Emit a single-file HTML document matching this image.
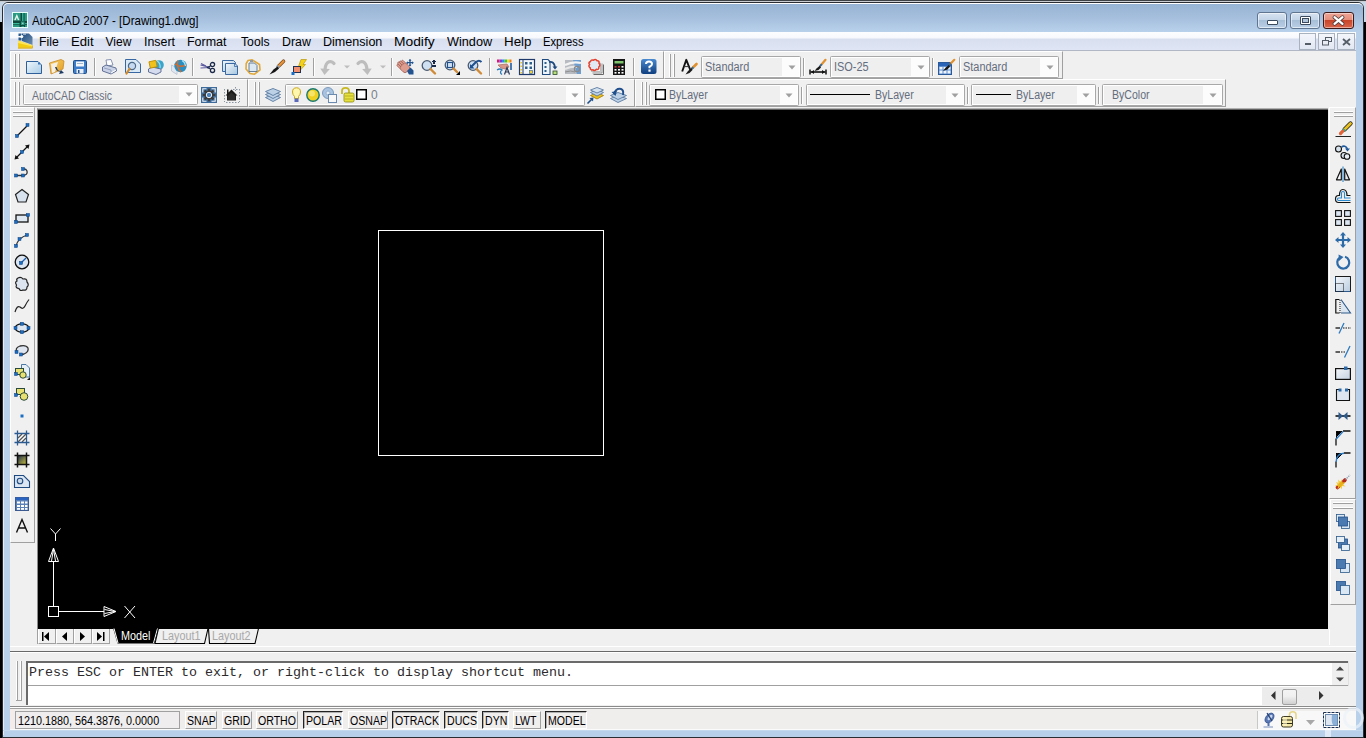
<!DOCTYPE html><html><head><meta charset="utf-8"><title>AutoCAD 2007</title><style>
*{margin:0;padding:0;box-sizing:border-box}
html,body{width:1366px;height:738px;overflow:hidden;background:#000;font-family:"Liberation Sans",sans-serif}
.a{position:absolute}
.t{white-space:nowrap;line-height:14px;font-size:12px;color:#000}
svg{overflow:visible}
</style></head><body>
<div class="a" style="left:0px;top:0px;width:1366px;height:1px;background:#3d4246"></div>
<div class="a" style="left:0px;top:1px;width:1366px;height:1px;background:#c9cdd1"></div>
<div class="a" style="left:0px;top:2px;width:10px;height:20px;background:#c9d8e6"></div>
<div class="a" style="left:1356px;top:2px;width:10px;height:20px;background:#c9d8e6"></div>
<div class="a" style="left:2px;top:2px;width:1362px;height:736px;background:#b8d0ea;border:1px solid #2b2f33;border-radius:6px 6px 0 0"></div>
<div class="a" style="left:3px;top:3px;width:1360px;height:29px;background:linear-gradient(#98b4d4,#a5bfdd 50%,#b9d1eb);border-top:1px solid #fff;border-left:1px solid #e4edf7;border-radius:5px 5px 0 0"></div>
<div class="a" style="left:3px;top:22px;width:1px;height:713px;background:#e4edf7"></div>
<div class="a" style="left:3px;top:730px;width:1360px;height:1px;background:#c5d9ee"></div>
<svg class="a" style="left:12px;top:12px" width="16" height="16" viewBox="0 0 16 16"><rect x="0" y="0" width="16" height="16" fill="#e6fff8"/><rect x="1" y="1" width="14" height="14" fill="#0f4a3e"/><path d="M1 1 H8.5 V9 H1 Z" fill="#2a9a82"/><path d="M2 8.5 L4.8 2 L7.6 8.5 Z" fill="#e8f4ee"/><path d="M3.6 8.5 L4.8 5.5 L6 8.5 Z" fill="#2a9a82"/><rect x="1" y="8.5" width="7" height="1.2" fill="#0f4a3e"/><rect x="10" y="1" width="1.5" height="8" fill="#35b095"/><rect x="12.5" y="1" width="2.5" height="8" fill="#2a9a82"/><rect x="1" y="11" width="6.5" height="1.3" fill="#3ab89a"/><rect x="1" y="13" width="6.5" height="2" fill="#2a9a82"/><rect x="9" y="9.5" width="3.5" height="3.5" fill="#2a9a82"/><rect x="10.3" y="10.8" width="1" height="1" fill="#fff"/><rect x="13" y="11" width="2" height="1.2" fill="#35b095"/><rect x="13" y="13" width="2" height="2" fill="#2a9a82"/><rect x="9.5" y="14" width="2.5" height="1" fill="#2a9a82"/></svg>
<div class="a t" style="left:32px;top:14px;font-size:12.4px;transform:scaleX(0.93);transform-origin:0 0;color:#000">AutoCAD 2007 - [Drawing1.dwg]</div>
<div class="a" style="left:1257px;top:12px;width:30px;height:17px;border:1px solid #5f7590;border-radius:3px;background:linear-gradient(#d5e2f0 0,#c4d5e8 45%,#a8bfd8 50%,#b9cfe6 100%);box-shadow:inset 0 0 0 1px rgba(255,255,255,.55)"></div>
<div class="a" style="left:1267px;top:20px;width:11px;height:5px;background:#fff;border:1px solid #3b4a5c;border-radius:1px"></div>
<div class="a" style="left:1290px;top:12px;width:30px;height:17px;border:1px solid #5f7590;border-radius:3px;background:linear-gradient(#d5e2f0 0,#c4d5e8 45%,#a8bfd8 50%,#b9cfe6 100%);box-shadow:inset 0 0 0 1px rgba(255,255,255,.55)"></div>
<div class="a" style="left:1300px;top:16px;width:11px;height:9px;background:#fff;border:1px solid #3b4a5c;border-radius:1px"></div>
<div class="a" style="left:1302px;top:18px;width:7px;height:5px;background:#b0c4da;border:1px solid #3b4a5c"></div>
<div class="a" style="left:1323px;top:12px;width:31px;height:17px;border:1px solid #3c1a1a;border-radius:3px;background:linear-gradient(#eea596 0,#e58e7c 45%,#c9452a 50%,#d9664b 100%);box-shadow:inset 0 0 0 1px rgba(255,255,255,.45)"></div>
<svg class="a" style="left:1333px;top:16px" width="11" height="9" viewBox="0 0 11 9"><path d="M1.5 1.2 L9.5 7.8 M9.5 1.2 L1.5 7.8" stroke="#4a3a3a" stroke-width="3.8" stroke-linecap="round"/><path d="M1.5 1.2 L9.5 7.8 M9.5 1.2 L1.5 7.8" stroke="#fff" stroke-width="2.3" stroke-linecap="round"/></svg>
<div class="a" style="left:10px;top:32px;width:1346px;height:698px;background:#f0f0f0"></div>
<div class="a" style="left:10px;top:32px;width:1346px;height:18px;background:linear-gradient(#fcfdfe 0,#f6f8fc 6px,#d8dfef 7px,#dfe5f5 100%)"></div>
<div class="a" style="left:10px;top:50px;width:1346px;height:1px;background:#b1b7c4"></div>
<svg class="a" style="left:18px;top:33px" width="16" height="16" viewBox="0 0 16 16"><defs><linearGradient id="gmi" x1="0" y1="0" x2="1" y2="1"><stop offset="0" stop-color="#1f4d80"/><stop offset="1" stop-color="#6f8fae"/></linearGradient></defs><path d="M4 0.5 H11 L14.5 4 V12 L4 8 Z" fill="url(#gmi)"/><rect x="0.5" y="0.5" width="3" height="2.5" fill="#2a5a8a"/><rect x="0.5" y="4.5" width="3" height="3" fill="#2a5a8a"/><rect x="5" y="0.5" width="3" height="1.5" fill="#fff" opacity=".5"/><circle cx="3.8" cy="3.5" r="1.5" fill="#fff"/><path d="M0 7.5 L12 11.5 L14.5 12.5 V15.5 H0 Z" fill="#f2cc10"/><path d="M0 7.5 L12 11.5 L14.5 12.5 V13.5 L0 10 Z" fill="#fbe45a"/><path d="M0 15 H14.5 V12.5" stroke="#d8b040" stroke-width="1" fill="none"/></svg>
<div class="a t" style="left:39px;top:35px;font-size:12px;transform:scaleX(1.023);transform-origin:0 0">File</div>
<div class="a t" style="left:70.7px;top:35px;font-size:12px;transform:scaleX(1.095);transform-origin:0 0">Edit</div>
<div class="a t" style="left:105.5px;top:35px;font-size:12px;transform:scaleX(1.000);transform-origin:0 0">View</div>
<div class="a t" style="left:144px;top:35px;font-size:12px;transform:scaleX(1.033);transform-origin:0 0">Insert</div>
<div class="a t" style="left:187px;top:35px;font-size:12px;transform:scaleX(1.040);transform-origin:0 0">Format</div>
<div class="a t" style="left:241px;top:35px;font-size:12px;transform:scaleX(1.018);transform-origin:0 0">Tools</div>
<div class="a t" style="left:282px;top:35px;font-size:12px;transform:scaleX(1.028);transform-origin:0 0">Draw</div>
<div class="a t" style="left:322.8px;top:35px;font-size:12px;transform:scaleX(1.047);transform-origin:0 0">Dimension</div>
<div class="a t" style="left:393.8px;top:35px;font-size:12px;transform:scaleX(1.150);transform-origin:0 0">Modify</div>
<div class="a t" style="left:446.5px;top:35px;font-size:12px;transform:scaleX(1.057);transform-origin:0 0">Window</div>
<div class="a t" style="left:503.8px;top:35px;font-size:12px;transform:scaleX(1.112);transform-origin:0 0">Help</div>
<div class="a t" style="left:543px;top:35px;font-size:12px;transform:scaleX(0.936);transform-origin:0 0">Express</div>
<div class="a" style="left:1299px;top:33px;width:17px;height:17px;border:1px solid #a9b2bf;background:linear-gradient(#f3f6fb,#e2e8f2)"></div>
<div class="a" style="left:1318px;top:33px;width:17px;height:17px;border:1px solid #a9b2bf;background:linear-gradient(#f3f6fb,#e2e8f2)"></div>
<div class="a" style="left:1337px;top:33px;width:18px;height:17px;border:1px solid #a9b2bf;background:linear-gradient(#f3f6fb,#e2e8f2)"></div>
<div class="a" style="left:1305px;top:43px;width:6px;height:2px;background:#555d66"></div>
<svg class="a" style="left:1322px;top:37px" width="10" height="9" viewBox="0 0 10 9"><rect x="3.5" y="0.5" width="6" height="4" fill="none" stroke="#555d66"/><rect x="0.5" y="3.5" width="6" height="4.5" fill="#e8edf4" stroke="#555d66"/></svg>
<svg class="a" style="left:1342px;top:38px" width="9" height="8" viewBox="0 0 9 8"><path d="M1 1 L8 7 M8 1 L1 7" stroke="#555d66" stroke-width="1.8"/></svg>
<div class="a" style="left:10px;top:51px;width:1346px;height:0px;"></div>
<div class="a" style="left:10px;top:51px;width:654px;height:28px;background:#f0f0f0;border-top:1px solid #fff;border-left:1px solid #fff;border-right:1px solid #a0a0a0;border-bottom:1px solid #a0a0a0"></div>
<div class="a" style="left:14px;top:54px;width:1px;height:23px;background:#fff"></div>
<div class="a" style="left:15px;top:54px;width:1px;height:23px;background:#a0a0a0"></div>
<div class="a" style="left:18px;top:54px;width:1px;height:23px;background:#fff"></div>
<div class="a" style="left:19px;top:54px;width:1px;height:23px;background:#a0a0a0"></div>
<div class="a" style="left:664px;top:51px;width:399px;height:28px;background:#f0f0f0;border-top:1px solid #fff;border-left:1px solid #fff;border-right:1px solid #a0a0a0;border-bottom:1px solid #a0a0a0"></div>
<div class="a" style="left:669px;top:54px;width:1px;height:23px;background:#fff"></div>
<div class="a" style="left:670px;top:54px;width:1px;height:23px;background:#a0a0a0"></div>
<div class="a" style="left:673px;top:54px;width:1px;height:23px;background:#fff"></div>
<div class="a" style="left:674px;top:54px;width:1px;height:23px;background:#a0a0a0"></div>
<div class="a" style="left:10px;top:79px;width:238px;height:28px;background:#f0f0f0;border-top:1px solid #fff;border-left:1px solid #fff;border-right:1px solid #a0a0a0;border-bottom:1px solid #a0a0a0"></div>
<div class="a" style="left:14px;top:82px;width:1px;height:23px;background:#fff"></div>
<div class="a" style="left:15px;top:82px;width:1px;height:23px;background:#a0a0a0"></div>
<div class="a" style="left:18px;top:82px;width:1px;height:23px;background:#fff"></div>
<div class="a" style="left:19px;top:82px;width:1px;height:23px;background:#a0a0a0"></div>
<div class="a" style="left:248px;top:79px;width:387px;height:28px;background:#f0f0f0;border-top:1px solid #fff;border-left:1px solid #fff;border-right:1px solid #a0a0a0;border-bottom:1px solid #a0a0a0"></div>
<div class="a" style="left:254px;top:82px;width:1px;height:23px;background:#fff"></div>
<div class="a" style="left:255px;top:82px;width:1px;height:23px;background:#a0a0a0"></div>
<div class="a" style="left:258px;top:82px;width:1px;height:23px;background:#fff"></div>
<div class="a" style="left:259px;top:82px;width:1px;height:23px;background:#a0a0a0"></div>
<div class="a" style="left:635px;top:79px;width:591px;height:28px;background:#f0f0f0;border-top:1px solid #fff;border-left:1px solid #fff;border-right:1px solid #a0a0a0;border-bottom:1px solid #a0a0a0"></div>
<div class="a" style="left:641px;top:82px;width:1px;height:23px;background:#fff"></div>
<div class="a" style="left:642px;top:82px;width:1px;height:23px;background:#a0a0a0"></div>
<div class="a" style="left:645px;top:82px;width:1px;height:23px;background:#fff"></div>
<div class="a" style="left:646px;top:82px;width:1px;height:23px;background:#a0a0a0"></div>
<svg class="a" style="left:26px;top:61px" width="16" height="13" viewBox="0 0 16 13"><defs><linearGradient id="gn" x1="0" y1="0" x2="1" y2="1"><stop offset="0" stop-color="#eef7fd"/><stop offset="1" stop-color="#a9cbe4"/></linearGradient></defs><path d="M0.5 0.5 H12 L15.5 4 V12.5 H0.5 Z" fill="url(#gn)" stroke="#2f5f98"/><rect x="12" y="1.5" width="2" height="2" fill="#3a78c0"/></svg>
<svg class="a" style="left:49px;top:59px" width="16" height="16" viewBox="0 0 16 16"><defs><linearGradient id="go" x1="0" y1="0" x2="1" y2="1"><stop offset="0" stop-color="#f7d36a"/><stop offset="1" stop-color="#e39a1e"/></linearGradient></defs><path d="M0.5 4 L12 0.5 L15 2 L14 10 L2 15 Z" fill="url(#go)" stroke="#c98a2a" stroke-width="0.8"/><path d="M2 5 L9 3 L6 13 L3 14 Z" fill="#f4f0e6"/><path d="M6 8 Q7 12 11 13 L10 15 L15 14 L12 11 L11 12.5 Q8 11 7.5 8 Z" fill="#1d3b63"/></svg>
<svg class="a" style="left:73px;top:60px" width="14" height="14" viewBox="0 0 14 14"><rect x="0.5" y="0.5" width="13" height="13" rx="1" fill="#3d7cc9" stroke="#1f4f8c"/><rect x="3" y="1.5" width="8" height="5" fill="#f2f5fa"/><rect x="4" y="3" width="6" height="1" fill="#9fb7d3"/><rect x="3.5" y="9" width="7" height="4.5" fill="#e9eef5"/><rect x="5" y="10" width="1.5" height="3" fill="#1f4f8c"/></svg>
<div class="a" style="left:94px;top:58px;width:1px;height:18px;background:#a0a0a0"></div>
<div class="a" style="left:95px;top:58px;width:1px;height:18px;background:#fff"></div>
<svg class="a" style="left:102px;top:59px" width="15" height="16" viewBox="0 0 15 16"><path d="M4 1 L9 0.5 L11 6 L5 7 Z" fill="#fff" stroke="#6a7aa0" stroke-width="0.8"/><path d="M0.5 8 L4 6 L14 9 L14.5 12 L9 15 L0.5 12 Z" fill="#c9d2e6" stroke="#56648c" stroke-width="0.9"/><path d="M2 9 L9 11 L9 14" stroke="#8995b5" fill="none" stroke-width="0.8"/><path d="M9 14 L14 11" stroke="#fff" stroke-width="1"/></svg>
<svg class="a" style="left:125px;top:59px" width="16" height="16" viewBox="0 0 16 16"><path d="M0.5 0.5 H11 L15.5 5 V13.5 H0.5 Z" fill="#d9e9f6" stroke="#3867a2"/><circle cx="7" cy="7" r="3.6" fill="#c5daf0" stroke="#4d6a8c" stroke-width="1.2"/><path d="M4.5 10 L1.5 14.5" stroke="#d08a2a" stroke-width="2.2" stroke-linecap="round"/></svg>
<svg class="a" style="left:148px;top:59px" width="16" height="16" viewBox="0 0 16 16"><circle cx="11" cy="6" r="4.8" fill="#3ba4c8"/><path d="M9 2 Q13 4 12 10" stroke="#9be0f4" stroke-width="1.2" fill="none"/><path d="M0.5 10 L4 8 L13 10 L13 13 L8 15.5 L0.5 13 Z" fill="#d5dcef" stroke="#56648c" stroke-width="0.9"/><rect x="1.5" y="2" width="7" height="6.5" transform="rotate(-12 5 5)" fill="#f1c21b" stroke="#b88a00" stroke-width="0.8"/></svg>
<svg class="a" style="left:171px;top:59px" width="16" height="16" viewBox="0 0 16 16"><path d="M0.5 6 L6 9 L6 15.5 L0.5 12 Z" fill="#e3e8f0" stroke="#b8c2d0" stroke-width="0.8"/><circle cx="9.5" cy="7" r="6.2" fill="#2a8fc0"/><path d="M4 5 Q9 9 15 6 M7 1.5 Q5 8 10 13" stroke="#d86a2a" stroke-width="1.6" fill="none"/><path d="M11 1.5 Q14 3 14.5 7" stroke="#a8e3f8" stroke-width="1.2" fill="none"/></svg>
<div class="a" style="left:192px;top:58px;width:1px;height:18px;background:#a0a0a0"></div>
<div class="a" style="left:193px;top:58px;width:1px;height:18px;background:#fff"></div>
<svg class="a" style="left:200px;top:62px" width="16" height="11" viewBox="0 0 16 11"><path d="M0.5 3 L10 5.5 M0.5 6 L10 5.5 M1 1.5 L6 4" stroke="#5c5aa0" stroke-width="1.1"/><circle cx="12.5" cy="2.6" r="2.1" fill="none" stroke="#1c2a4a" stroke-width="1.3"/><circle cx="12.5" cy="8.4" r="2.1" fill="none" stroke="#1c2a4a" stroke-width="1.3"/><path d="M7 5.5 L10.5 4 M7 5.5 L10.5 7" stroke="#1c2a4a" stroke-width="1.1"/></svg>
<svg class="a" style="left:222px;top:60px" width="16" height="15" viewBox="0 0 16 15"><defs><linearGradient id="gc" x1="0" y1="0" x2="1" y2="1"><stop offset="0" stop-color="#f1f7fc"/><stop offset="1" stop-color="#a7c6de"/></linearGradient></defs><path d="M0.5 0.5 H11.5 L13.5 2.5 V11.5 H0.5 Z" fill="url(#gc)" stroke="#3a68a0"/><path d="M3.5 3.5 H13 L15.5 6 V14.5 H3.5 Z" fill="url(#gc)" stroke="#3a68a0"/><path d="M12.5 4 V6.5 H15" stroke="#3a68a0" fill="none" stroke-width="0.8"/></svg>
<svg class="a" style="left:245px;top:59px" width="16" height="16" viewBox="0 0 16 16"><path d="M3 1.5 L7 0.8 L9 2 L14.5 5.5 L15 11 L9.5 15.2 L5 14.5 L1 10 L1.2 4.5 Z" fill="#eef2f6" stroke="#e0a838" stroke-width="1.6"/><path d="M4 4 H9.5 L12 6.5 V12.5 H4 Z" fill="#dce8f2" stroke="#5a7288" stroke-width="0.9"/><path d="M5 1 H8 V3 H5 Z" fill="#8a9aaa"/></svg>
<svg class="a" style="left:269px;top:60px" width="16" height="15" viewBox="0 0 16 15"><path d="M14.5 1.2 L9.5 6.2" stroke="#7a4a20" stroke-width="3.6" stroke-linecap="round"/><path d="M14.5 1.2 L9.5 6.2" stroke="#e8943a" stroke-width="2.2" stroke-linecap="round"/><path d="M9.8 5.8 L8 7.6" stroke="#8a9aa8" stroke-width="3"/><path d="M8.5 6.5 L4.5 9.5 L0.5 14.5 L6 12 L10 8.5 Z" fill="#151515"/></svg>
<svg class="a" style="left:291px;top:59px" width="16" height="16" viewBox="0 0 16 16"><path d="M10 0.5 L15.5 0.5 L12 5.5 L14.5 5.5 L8.5 12 L10 7.5 L7.5 7.5 Z" fill="#f5d21a" stroke="#b8960a" stroke-width="0.7"/><rect x="2.5" y="7.5" width="7" height="6" fill="#f09070" stroke="#1f3050"/><rect x="0.5" y="13" width="3" height="3" fill="#1a6fc4"/></svg>
<div class="a" style="left:313px;top:58px;width:1px;height:18px;background:#a0a0a0"></div>
<div class="a" style="left:314px;top:58px;width:1px;height:18px;background:#fff"></div>
<svg class="a" style="left:320px;top:60px" width="16" height="15" viewBox="0 0 16 15"><path d="M14 3.5 Q12 0.8 9 1.8 Q5.5 3.2 5 9.5" stroke="#bdbdbd" stroke-width="3.2" fill="none" stroke-linecap="round"/><path d="M0.3 8.5 L9.8 9 L4.5 15 Z" fill="#bdbdbd"/></svg>
<svg class="a" style="left:344px;top:65px" width="6" height="4" viewBox="0 0 6 4"><path d="M0 0.5h6l-3 3z" fill="#bdbdbd"/></svg>
<svg class="a" style="left:356px;top:60px" width="16" height="15" viewBox="0 0 16 15"><path d="M2 3.5 Q4 0.8 7 1.8 Q10.5 3.2 11 9.5" stroke="#bdbdbd" stroke-width="3.2" fill="none" stroke-linecap="round"/><path d="M15.7 8.5 L6.2 9 L11.5 15 Z" fill="#bdbdbd"/></svg>
<svg class="a" style="left:380px;top:65px" width="6" height="4" viewBox="0 0 6 4"><path d="M0 0.5h6l-3 3z" fill="#bdbdbd"/></svg>
<div class="a" style="left:391px;top:58px;width:1px;height:18px;background:#a0a0a0"></div>
<div class="a" style="left:392px;top:58px;width:1px;height:18px;background:#fff"></div>
<svg class="a" style="left:398px;top:59px" width="16" height="16" viewBox="0 0 16 16"><g transform="rotate(-45 7 9)"><g fill="#dc9c8e" stroke="#9c5a50" stroke-width="0.7"><rect x="3" y="1" width="2" height="7" rx="1"/><rect x="5" y="0" width="2" height="8" rx="1"/><rect x="7" y="0.5" width="2" height="8" rx="1"/><rect x="9" y="1.5" width="2" height="7" rx="1"/><rect x="3" y="5" width="8" height="8" rx="2.5"/></g><rect x="3.6" y="5.5" width="6.8" height="4" fill="#dc9c8e"/></g><path d="M9 12 L12.5 8.5 L15.5 11.5 L15.5 15.5 L11 15.5 Z" fill="#23538f"/><path d="M12 0.5 V7 M8.8 3.7 H15.2" stroke="#23538f" stroke-width="1.3"/><path d="M12 0 L10.5 1.8 H13.5 Z M12 7.5 L10.5 5.7 H13.5Z M8.3 3.7 L10 2.2 V5.2Z M15.7 3.7 L14 2.2 V5.2Z" fill="#23538f"/></svg>
<svg class="a" style="left:421px;top:59px" width="16" height="16" viewBox="0 0 16 16"><circle cx="6" cy="6.5" r="4.8" fill="#cfe0f2" stroke="#4a5a70" stroke-width="1.3"/><path d="M9.5 10 L14 14.5" stroke="#cf8a3a" stroke-width="2.4" stroke-linecap="round"/><path d="M13 0.8 V5 M10.8 2.9 H15.2 M10.8 7 H15.2" stroke="#1a2a4a" stroke-width="1.1" shape-rendering="crispEdges"/></svg>
<svg class="a" style="left:444px;top:59px" width="16" height="16" viewBox="0 0 16 16"><circle cx="6" cy="6" r="4.8" fill="#cfe0f2" stroke="#4a5a70" stroke-width="1.3"/><rect x="3.5" y="3.5" width="5" height="5" fill="none" stroke="#1f4f8c" stroke-width="1.1"/><path d="M9.5 9.5 L13 13" stroke="#cf8a3a" stroke-width="2.4" stroke-linecap="round"/><path d="M16 12 L16 16 L12 16 Z" fill="#000"/></svg>
<svg class="a" style="left:467px;top:59px" width="16" height="16" viewBox="0 0 16 16"><circle cx="6" cy="6.5" r="4.8" fill="#cfe0f2" stroke="#4a5a70" stroke-width="1.3"/><path d="M9.5 10 L14 14.5" stroke="#cf8a3a" stroke-width="2.4" stroke-linecap="round"/><path d="M4 8 L9 3 Q12 0.5 14.5 3" stroke="#1f4f8c" stroke-width="2" fill="none"/><path d="M3 5 L3 9.5 L7.5 9.5 Z" fill="#1f4f8c"/></svg>
<div class="a" style="left:489px;top:58px;width:1px;height:18px;background:#a0a0a0"></div>
<div class="a" style="left:490px;top:58px;width:1px;height:18px;background:#fff"></div>
<svg class="a" style="left:496px;top:59px" width="16" height="16" viewBox="0 0 16 16"><rect x="1" y="0.5" width="2.5" height="3" fill="#e2136e"/><rect x="3.5" y="0.5" width="2.5" height="3" fill="#7a3bd6"/><rect x="6" y="0.5" width="2.5" height="3" fill="#2f8ce8"/><rect x="8.5" y="0.5" width="2.5" height="3" fill="#3ec83e"/><rect x="11" y="0.5" width="2.5" height="3" fill="#f2dc24"/><rect x="13.5" y="0.5" width="2" height="3" fill="#f07c1a"/><path d="M2 6 L11 5 L13 8 L9 10 L5 9 Z" fill="#d9968a" stroke="#a86860" stroke-width="0.7"/><rect x="14" y="4" width="2" height="7" fill="#4a7ab0"/><path d="M1 11 Q4 9 6 11 Q3 13 6 15.5" stroke="#2a7ab8" stroke-width="1.3" fill="none"/><path d="M8.5 15.5 L11 8.5 L13.5 15.5 M9.5 13 H12.5" stroke="#2a3a5a" stroke-width="1.2" fill="none"/></svg>
<svg class="a" style="left:519px;top:59px" width="16" height="16" viewBox="0 0 16 16"><rect x="0.5" y="0.5" width="15" height="15" fill="#f4f8fc" stroke="#1f3a6a" stroke-width="1.2"/><path d="M4 1 V15" stroke="#1f3a6a"/><rect x="1.5" y="3" width="1.5" height="1.5" fill="#e8c42a"/><rect x="1.5" y="6.5" width="1.5" height="1.5" fill="#e8c42a"/><rect x="1.5" y="10" width="1.5" height="1.5" fill="#e8c42a"/><rect x="1.5" y="13" width="1.5" height="1.5" fill="#e8c42a"/><rect x="6" y="3" width="2.5" height="2.5" fill="#2e5e8a"/><rect x="10.5" y="3" width="2.5" height="2.5" fill="#2e5e8a"/><rect x="6" y="7.5" width="2.5" height="2.5" fill="#2e5e8a"/><rect x="10.5" y="7.5" width="2.5" height="2.5" fill="#2e5e8a"/><rect x="10.5" y="11.5" width="3" height="3" fill="#f0d040" stroke="#2e5e8a" stroke-width="0.6"/></svg>
<svg class="a" style="left:542px;top:59px" width="16" height="16" viewBox="0 0 16 16"><path d="M0.5 0.5 H6 L8 2.5 V15.5 H0.5 Z" fill="#eef4fa" stroke="#1f4a80" stroke-width="1.1"/><rect x="2.5" y="3" width="2" height="2" fill="#2e5e8a"/><rect x="2.5" y="7" width="2" height="2" fill="#2e5e8a"/><rect x="2.5" y="11" width="2" height="2" fill="#2e5e8a"/><path d="M7 3 Q12 2 13 8" stroke="#1f4a80" stroke-width="1.8" fill="none"/><path d="M10.5 7.5 L15.5 7.5 L13 10.5 Z" fill="#1f4a80"/><rect x="11" y="12" width="4" height="3.5" fill="#b8e07a" stroke="#2a4a2a" stroke-width="0.8"/></svg>
<svg class="a" style="left:565px;top:59px" width="16" height="16" viewBox="0 0 16 16"><rect x="0" y="1" width="16" height="14" fill="#b8bcc2"/><path d="M8 1 H16 V15 H12 Z" fill="#6e9ed0"/><path d="M0 6 Q8 2 16 4" stroke="#f4f4f4" stroke-width="2.2" fill="none"/><path d="M0 10 Q7 7 12 8" stroke="#e8e8e8" stroke-width="2" fill="none"/><circle cx="12" cy="10" r="2.6" fill="none" stroke="#8a8a8a" stroke-width="1.2"/><path d="M0 13 Q6 11 10 13" stroke="#909090" stroke-width="1" fill="none"/></svg>
<svg class="a" style="left:588px;top:59px" width="16" height="16" viewBox="0 0 16 16"><path d="M5.5 15.5 H15.5 V5.5" stroke="#666" stroke-width="1" fill="none"/><path d="M4.5 14 H14 V4.5" stroke="#888" stroke-width="0.9" fill="none"/><path d="M3.5 4 H12.5 V12.5 H3.5 Z" fill="#f6f6f6" stroke="#a0a0a0" stroke-width="0.7"/><path d="M2.5 2.5 Q3 0.3 5.5 1.2 Q7.5 -0.3 9 1.8 Q11.5 1.5 11 4.3 Q12.8 6.3 10.8 8 Q11.2 10.8 8.5 10.3 Q7 12.3 5 10.8 Q2.3 11.5 2.3 9 Q0 7.5 1.5 5.5 Q0 3.5 2.5 2.5 Z" fill="#dfe8f3" stroke="#e3402e" stroke-width="1.5"/></svg>
<svg class="a" style="left:613px;top:59px" width="12" height="16" viewBox="0 0 12 16"><rect x="0" y="0" width="12" height="16" fill="#151515"/><rect x="1.5" y="2" width="9" height="2.5" fill="#7dc46a"/><g fill="#fff"><rect x="1.5" y="7" width="2" height="1.6" fill="#c23a3a"/><rect x="5" y="7" width="2" height="1.6" fill="#c23a3a"/><rect x="8.5" y="7" width="2" height="1.6" fill="#fff"/><rect x="1.5" y="10" width="2" height="1.6"/><rect x="5" y="10" width="2" height="1.6"/><rect x="8.5" y="10" width="2" height="1.6"/><rect x="1.5" y="13" width="2" height="1.6"/><rect x="5" y="13" width="2" height="1.6"/><rect x="8.5" y="13" width="2" height="1.6"/></g></svg>
<div class="a" style="left:633px;top:58px;width:1px;height:18px;background:#a0a0a0"></div>
<div class="a" style="left:634px;top:58px;width:1px;height:18px;background:#fff"></div>
<svg class="a" style="left:641px;top:59px" width="16" height="15" viewBox="0 0 16 15"><defs><linearGradient id="gh" x1="0" y1="0" x2="0" y2="1"><stop offset="0" stop-color="#4a8ad0"/><stop offset="1" stop-color="#0f3f7f"/></linearGradient></defs><rect x="0" y="0" width="15.5" height="15" rx="2.5" fill="url(#gh)"/><path d="M5 5 Q5 2.5 8 2.5 Q11 2.5 11 5 Q11 6.8 8.5 7.8 V9.3" stroke="#fff" stroke-width="2" fill="none"/><rect x="7.4" y="10.5" width="2.2" height="2.2" fill="#fff"/></svg>
<svg class="a" style="left:681px;top:59px" width="17" height="17" viewBox="0 0 17 17"><path d="M1.2 12.5 L5.3 0.8 L9.3 11" stroke="#111" stroke-width="1.9" fill="none" stroke-linejoin="round"/><path d="M3 7.6 H8" stroke="#333" stroke-width="1"/><path d="M15.5 5 L12 8.5" stroke="#e0902e" stroke-width="2.6" stroke-linecap="round"/><path d="M12.3 8.2 L10.5 10" stroke="#3a6a90" stroke-width="2.2"/><path d="M10.5 9 L7 12 L4.5 15.5 L8.5 14 L11.5 11 Z" fill="#1a1a1a"/></svg>
<div class="a" style="left:701px;top:56px;width:100px;height:22px;background:#efefef;border:1px solid #a8a8a8;border-radius:1.5px;box-shadow:inset 0 0 0 1px #fff"></div>
<div class="a" style="left:782px;top:58px;width:17px;height:18px;background:#fcfcfc"></div>
<svg class="a" style="left:788px;top:65px" width="8" height="5" viewBox="0 0 8 5"><path d="M0.5 0.5h7l-3.5 4z" fill="#a0a0a0"/></svg>
<div class="a t" style="left:705px;top:60px;font-size:12px;color:#646d7e;transform:scaleX(0.91);transform-origin:0 0;">Standard</div>
<div class="a" style="left:803px;top:58px;width:1px;height:18px;background:#a0a0a0"></div>
<div class="a" style="left:804px;top:58px;width:1px;height:18px;background:#fff"></div>
<svg class="a" style="left:809px;top:59px" width="18" height="17" viewBox="0 0 18 17"><path d="M1.5 13 H16.5" stroke="#111" stroke-width="1.6"/><path d="M1 10.5 V15.5 M17 10.5 V15.5" stroke="#111" stroke-width="1.5"/><path d="M2 13 L5 11 V15 Z M16 13 L13 11 V15 Z" fill="#111"/><path d="M16.5 0.8 L12.5 5.5" stroke="#e0902e" stroke-width="2.2" stroke-linecap="round"/><path d="M12.8 5.2 L11 7.2" stroke="#3a6a90" stroke-width="2"/><path d="M11 6.5 L7.5 9.5 L5.5 12 L9.5 11 L12 8.5 Z" fill="#1a1a1a"/></svg>
<div class="a" style="left:830px;top:56px;width:100px;height:22px;background:#efefef;border:1px solid #a8a8a8;border-radius:1.5px;box-shadow:inset 0 0 0 1px #fff"></div>
<div class="a" style="left:911px;top:58px;width:17px;height:18px;background:#fcfcfc"></div>
<svg class="a" style="left:917px;top:65px" width="8" height="5" viewBox="0 0 8 5"><path d="M0.5 0.5h7l-3.5 4z" fill="#a0a0a0"/></svg>
<div class="a t" style="left:834px;top:60px;font-size:12px;color:#646d7e;transform:scaleX(0.91);transform-origin:0 0;">ISO-25</div>
<div class="a" style="left:932px;top:58px;width:1px;height:18px;background:#a0a0a0"></div>
<div class="a" style="left:933px;top:58px;width:1px;height:18px;background:#fff"></div>
<svg class="a" style="left:938px;top:59px" width="17" height="16" viewBox="0 0 17 16"><rect x="0.5" y="3.5" width="13" height="12" fill="#5f8fcf" stroke="#2a5a9a"/><rect x="1" y="4" width="12" height="3" fill="#2a64b8"/><g fill="#eef4fb"><rect x="1.5" y="8" width="3" height="2.5"/><rect x="5.5" y="8" width="3" height="2.5"/><rect x="9.5" y="8" width="3" height="2.5"/><rect x="1.5" y="11.5" width="3" height="3"/><rect x="5.5" y="11.5" width="3" height="3"/><rect x="9.5" y="11.5" width="3" height="3"/></g><path d="M16.3 0.8 L12.5 4.8" stroke="#e0902e" stroke-width="2.2" stroke-linecap="round"/><path d="M12.8 4.5 L11 6.5" stroke="#3a6a90" stroke-width="2"/><path d="M11 5.8 L7.5 8.8 L5 12 L9.3 10.5 L12 7.8 Z" fill="#1a1a1a"/></svg>
<div class="a" style="left:959px;top:56px;width:100px;height:22px;background:#efefef;border:1px solid #a8a8a8;border-radius:1.5px;box-shadow:inset 0 0 0 1px #fff"></div>
<div class="a" style="left:1040px;top:58px;width:17px;height:18px;background:#fcfcfc"></div>
<svg class="a" style="left:1046px;top:65px" width="8" height="5" viewBox="0 0 8 5"><path d="M0.5 0.5h7l-3.5 4z" fill="#a0a0a0"/></svg>
<div class="a t" style="left:963px;top:60px;font-size:12px;color:#646d7e;transform:scaleX(0.91);transform-origin:0 0;">Standard</div>
<div class="a" style="left:23px;top:84px;width:175px;height:21px;background:#efefef;border:1px solid #a8a8a8;border-radius:1.5px;box-shadow:inset 0 0 0 1px #fff"></div>
<div class="a" style="left:179px;top:86px;width:17px;height:17px;background:#fcfcfc"></div>
<svg class="a" style="left:185px;top:92px" width="8" height="5" viewBox="0 0 8 5"><path d="M0.5 0.5h7l-3.5 4z" fill="#a0a0a0"/></svg>
<div class="a t" style="left:32px;top:87px;font-size:12px;color:#646d7e;transform:scaleX(0.91);transform-origin:0 0;color:#6b7080;transform:scaleX(0.87);top:89px">AutoCAD Classic</div>
<svg class="a" style="left:201px;top:87px" width="16" height="16" viewBox="0 0 16 16"><rect x="0" y="0" width="16" height="16" fill="#3d6b9b"/><path d="M1.8 5.5 V1.8 H5.5 M10.5 1.8 H14.2 V5.5 M14.2 10.5 V14.2 H10.5 M5.5 14.2 H1.8 V10.5" stroke="#eef4fa" stroke-width="1.1" fill="none"/><g stroke="#3b3b3b" stroke-width="2.2"><path d="M8 1.8 V14.2 M1.8 8 H14.2 M3.6 3.6 L12.4 12.4 M12.4 3.6 L3.6 12.4"/></g><circle cx="8" cy="8" r="4.6" fill="#3b3b3b"/><circle cx="8" cy="8" r="2.7" fill="#4a82bb" stroke="#e8f0f8" stroke-width="1"/></svg>
<svg class="a" style="left:224px;top:87px" width="16" height="16" viewBox="0 0 16 16"><path d="M0.5 2 V15" stroke="#8a96a2" stroke-dasharray="1.5 1.5"/><path d="M2 15.5 H15 M15.5 2 V15 M9 2.5 H15.5 M11.5 0 V4" stroke="#8a96a2" stroke-dasharray="1.5 1.5"/><path d="M1.5 8.5 L3 7 V2.5 H4.5 V5.5 L7.5 2.5 L13.5 8.5 H12 V13.5 H3 V8.5 Z" fill="#1c1c1c"/><path d="M4 9 L7.5 5.5 L11 9 V13 H4 Z" fill="#2c2c2c"/></svg>
<svg class="a" style="left:265px;top:88px" width="16" height="14" viewBox="0 0 16 14"><g stroke="#5a7aa0" stroke-width="0.9" fill="#bcd0e6"><path d="M0.5 9.5 L8 6.5 L15.5 9.5 L8 13.5 Z"/><path d="M0.5 6.5 L8 3.5 L15.5 6.5 L8 10.5 Z"/><path d="M0.5 3.5 L8 0.5 L15.5 3.5 L8 7.5 Z"/></g></svg>
<div class="a" style="left:285px;top:84px;width:300px;height:22px;background:#efefef;border:1px solid #a8a8a8;border-radius:1.5px;box-shadow:inset 0 0 0 1px #fff"></div>
<div class="a" style="left:566px;top:86px;width:17px;height:18px;background:#fcfcfc"></div>
<svg class="a" style="left:571px;top:93px" width="8" height="5" viewBox="0 0 8 5"><path d="M0.5 0.5h7l-3.5 4z" fill="#a0a0a0"/></svg>
<svg class="a" style="left:292px;top:87px" width="9" height="16" viewBox="0 0 9 16"><path d="M4.5 0.8 Q8.5 0.8 8.5 5 Q8.5 7.5 6.5 9.5 V11.5 H2.5 V9.5 Q0.5 7.5 0.5 5 Q0.5 0.8 4.5 0.8 Z" fill="#fff7b0" stroke="#c8a818" stroke-width="1"/><rect x="2.5" y="11.5" width="4" height="3.5" fill="#5a6ab8"/></svg>
<svg class="a" style="left:306px;top:88px" width="14" height="14" viewBox="0 0 14 14"><circle cx="7" cy="7" r="6.2" fill="#f0d020" stroke="#1a7a70" stroke-width="1.4"/><circle cx="6" cy="5.5" r="3" fill="#f7e46a"/></svg>
<svg class="a" style="left:322px;top:87px" width="15" height="16" viewBox="0 0 15 16"><circle cx="6" cy="6" r="5.5" fill="#a8c4e0" stroke="#6a8ab0" stroke-width="0.8"/><circle cx="6" cy="6" r="2" fill="#e0ecf6" stroke="#8aa8c8" stroke-width="0.8"/><rect x="6.5" y="7.5" width="8" height="8" fill="#f8f8f8" stroke="#6a8ab0"/></svg>
<svg class="a" style="left:340px;top:87px" width="15" height="16" viewBox="0 0 15 16"><path d="M2 7 V4 Q2 0.8 5.5 0.8 Q9 0.8 9 4 V6" stroke="#c8b820" stroke-width="1.8" fill="none"/><rect x="4" y="6" width="10" height="9" rx="1.5" fill="#e6e040" stroke="#8a8a10" stroke-width="0.8"/><path d="M5 9 H13 M5 12 H13" stroke="#b8b020"/></svg>
<svg class="a" style="left:356px;top:89px" width="11" height="11" viewBox="0 0 11 11"><rect x="0.75" y="0.75" width="9.5" height="9.5" fill="#fff" stroke="#000" stroke-width="1.5"/></svg>
<div class="a t" style="left:371px;top:88px;font-size:12px;color:#7a7f8a">0</div>
<svg class="a" style="left:587px;top:87px" width="17" height="17" viewBox="0 0 17 17"><g stroke="#5a7aa0" stroke-width="0.9"><path d="M3.5 8.5 L10 5.5 L16.5 8.5 L10 12 Z" fill="#e8c020" stroke="#a88010"/><path d="M3.5 5.5 L10 2.5 L16.5 5.5 L10 9 Z" fill="#bcd0e6"/><path d="M3.5 3 L10 0.5 L16.5 3 L10 6 Z" fill="#d4e2f0"/></g><path d="M0.5 16.5 L5 12" stroke="#1f4f8c" stroke-width="1.6"/><path d="M6.5 10.5 L2.5 11 L6 14.5 Z" fill="#1f4f8c"/></svg>
<svg class="a" style="left:610px;top:87px" width="17" height="17" viewBox="0 0 17 17"><g stroke="#5a7aa0" stroke-width="0.9" fill="#bcd0e6"><path d="M0.5 11.5 L8 8.5 L16.5 11.5 L8 15.5 Z"/><path d="M0.5 8.5 L8 5.5 L16.5 8.5 L8 12.5 Z"/></g><path d="M4 7 Q6 1 11 2 Q14 3 13 8" stroke="#1f4f8c" stroke-width="2" fill="none"/><path d="M1.5 5 L5.5 9 L7 4 Z" fill="#1f4f8c"/></svg>
<div class="a" style="left:649px;top:84px;width:150px;height:22px;background:#efefef;border:1px solid #a8a8a8;border-radius:1.5px;box-shadow:inset 0 0 0 1px #fff"></div>
<div class="a" style="left:780px;top:86px;width:17px;height:18px;background:#fcfcfc"></div>
<svg class="a" style="left:785px;top:93px" width="8" height="5" viewBox="0 0 8 5"><path d="M0.5 0.5h7l-3.5 4z" fill="#a0a0a0"/></svg>
<svg class="a" style="left:655px;top:89px" width="11" height="11" viewBox="0 0 11 11"><rect x="0.75" y="0.75" width="9.5" height="9.5" fill="#fff" stroke="#000" stroke-width="1.5"/></svg>
<div class="a t" style="left:669px;top:88px;font-size:12px;color:#646d7e;transform:scaleX(0.88);transform-origin:0 0">ByLayer</div>
<div class="a" style="left:801px;top:87px;width:1px;height:17px;background:#a0a0a0"></div>
<div class="a" style="left:802px;top:87px;width:1px;height:17px;background:#fff"></div>
<div class="a" style="left:806px;top:84px;width:159px;height:22px;background:#efefef;border:1px solid #a8a8a8;border-radius:1.5px;box-shadow:inset 0 0 0 1px #fff"></div>
<div class="a" style="left:946px;top:86px;width:17px;height:18px;background:#fcfcfc"></div>
<svg class="a" style="left:951px;top:93px" width="8" height="5" viewBox="0 0 8 5"><path d="M0.5 0.5h7l-3.5 4z" fill="#a0a0a0"/></svg>
<div class="a" style="left:810px;top:94px;width:60px;height:1px;background:#000"></div>
<div class="a t" style="left:875px;top:88px;font-size:12px;color:#646d7e;transform:scaleX(0.88);transform-origin:0 0">ByLayer</div>
<div class="a" style="left:967px;top:87px;width:1px;height:17px;background:#a0a0a0"></div>
<div class="a" style="left:968px;top:87px;width:1px;height:17px;background:#fff"></div>
<div class="a" style="left:971px;top:84px;width:125px;height:22px;background:#efefef;border:1px solid #a8a8a8;border-radius:1.5px;box-shadow:inset 0 0 0 1px #fff"></div>
<div class="a" style="left:1077px;top:86px;width:17px;height:18px;background:#fcfcfc"></div>
<svg class="a" style="left:1082px;top:93px" width="8" height="5" viewBox="0 0 8 5"><path d="M0.5 0.5h7l-3.5 4z" fill="#a0a0a0"/></svg>
<div class="a" style="left:976px;top:94px;width:35px;height:1px;background:#000"></div>
<div class="a t" style="left:1016px;top:88px;font-size:12px;color:#646d7e;transform:scaleX(0.88);transform-origin:0 0">ByLayer</div>
<div class="a" style="left:1098px;top:87px;width:1px;height:17px;background:#a0a0a0"></div>
<div class="a" style="left:1099px;top:87px;width:1px;height:17px;background:#fff"></div>
<div class="a" style="left:1102px;top:84px;width:121px;height:22px;background:#efefef;border:1px solid #a8a8a8;border-radius:1.5px;box-shadow:inset 0 0 0 1px #fff"></div>
<div class="a" style="left:1203px;top:86px;width:18px;height:18px;background:#fcfcfc"></div>
<svg class="a" style="left:1209px;top:93px" width="8" height="5" viewBox="0 0 8 5"><path d="M0.5 0.5h7l-3.5 4z" fill="#a0a0a0"/></svg>
<div class="a t" style="left:1112px;top:88px;font-size:12px;color:#646d7e;transform:scaleX(0.88);transform-origin:0 0">ByColor</div>
<div class="a" style="left:37px;top:108px;width:1291px;height:521px;background:#000;border-left:1px solid #8a8a8a;border-top:1px solid #b0b0b0"></div>
<div class="a" style="left:38px;top:109px;width:1290px;height:1px;background:#606060"></div>
<div class="a" style="left:378px;top:230px;width:226px;height:226px;border:1px solid #fff"></div>
<svg class="a" style="left:40px;top:520px" width="100" height="105" viewBox="0 0 100 105"><g stroke="#fff" stroke-width="1" fill="none" shape-rendering="crispEdges"><rect x="8.5" y="86.5" width="10" height="10"/><path d="M13.5 86 V42"/><path d="M18.5 91.5 H64"/></g><g stroke="#fff" stroke-width="1" fill="none"><path d="M8.5 41.5 L13.5 28 L18.5 41.5 Z M11.5 41 L13.5 29 L15.5 41"/><path d="M64 86.5 L76 91.5 L64 96.5 Z M64.5 89.5 L75 91.5 L64.5 93.5"/><path d="M10.5 8.5 L15.5 14 L20.5 8.5 M15.5 14 V21"/><path d="M84.5 86 L95 98 M95 86 L84.5 98"/></g></svg>
<div class="a" style="left:10px;top:107px;width:25px;height:436px;background:#f0f0f0;border-top:1px solid #fff;border-left:1px solid #fff;border-right:1px solid #a0a0a0;border-bottom:1px solid #a0a0a0"></div>
<div class="a" style="left:13px;top:111px;width:20px;height:1px;background:#fff"></div>
<div class="a" style="left:13px;top:112px;width:20px;height:1px;background:#a0a0a0"></div>
<div class="a" style="left:13px;top:115px;width:20px;height:1px;background:#fff"></div>
<div class="a" style="left:13px;top:116px;width:20px;height:1px;background:#a0a0a0"></div>
<svg class="a" style="left:14px;top:122px" width="16" height="16" viewBox="0 0 16 16"><path d="M3 14 L13 4" stroke="#111" stroke-width="1.3"/><rect x="1.5" y="12.5" width="3" height="3" fill="#1a6fc4" stroke="#0d3f7a" stroke-width="0.5"/><rect x="12.0" y="1.5" width="3" height="3" fill="#1a6fc4" stroke="#0d3f7a" stroke-width="0.5"/></svg>
<svg class="a" style="left:14px;top:144px" width="16" height="16" viewBox="0 0 16 16"><path d="M1.5 14.5 L14.5 1.5" stroke="#111" stroke-width="1.3"/><path d="M0.5 15.5 L1.5 11 L5 14.5 Z M15.5 0.5 L11 1.5 L14.5 5 Z" fill="#111"/><rect x="6.5" y="6.5" width="3" height="3" fill="#1a6fc4" stroke="#0d3f7a" stroke-width="0.5"/></svg>
<svg class="a" style="left:14px;top:166px" width="16" height="16" viewBox="0 0 16 16"><path d="M2 9.5 H9 Q14 9 13 5 Q12 2.5 9 3" stroke="#333" stroke-width="1.3" fill="none"/><rect x="0.5" y="8.0" width="3" height="3" fill="#1a6fc4" stroke="#0d3f7a" stroke-width="0.5"/><rect x="7.5" y="8.0" width="3" height="3" fill="#1a6fc4" stroke="#0d3f7a" stroke-width="0.5"/><rect x="7.5" y="1.5" width="3" height="3" fill="#1a6fc4" stroke="#0d3f7a" stroke-width="0.5"/></svg>
<svg class="a" style="left:14px;top:188px" width="16" height="16" viewBox="0 0 16 16"><path d="M8 1.5 L14.5 6.5 L12 14 H4 L1.5 6.5 Z" fill="#d8e2ee" stroke="#222" stroke-width="1.2"/></svg>
<svg class="a" style="left:14px;top:210px" width="16" height="16" viewBox="0 0 16 16"><rect x="2" y="5" width="12" height="7" fill="#dfe7f0" stroke="#111" stroke-width="1.3"/><rect x="0.5" y="10.5" width="3" height="3" fill="#1a6fc4" stroke="#0d3f7a" stroke-width="0.5"/><rect x="12.5" y="3.5" width="3" height="3" fill="#1a6fc4" stroke="#0d3f7a" stroke-width="0.5"/></svg>
<svg class="a" style="left:14px;top:232px" width="16" height="16" viewBox="0 0 16 16"><path d="M2 14 Q4 6 13 3" stroke="#333" stroke-width="1.3" fill="none"/><rect x="0.5" y="12.5" width="3" height="3" fill="#1a6fc4" stroke="#0d3f7a" stroke-width="0.5"/><rect x="4.0" y="5.5" width="3" height="3" fill="#1a6fc4" stroke="#0d3f7a" stroke-width="0.5"/><rect x="11.5" y="1.5" width="3" height="3" fill="#1a6fc4" stroke="#0d3f7a" stroke-width="0.5"/></svg>
<svg class="a" style="left:14px;top:254px" width="16" height="16" viewBox="0 0 16 16"><circle cx="8" cy="8" r="6.8" fill="#dde6f0" stroke="#111" stroke-width="1.3"/><path d="M7 9 L12 4" stroke="#1a5fb0" stroke-width="1.2"/><rect x="5.5" y="7.5" width="3" height="3" fill="#1a6fc4" stroke="#0d3f7a" stroke-width="0.5"/></svg>
<svg class="a" style="left:14px;top:276px" width="16" height="16" viewBox="0 0 16 16"><path d="M4 2 Q7 0.5 9 3 Q13 2 13 6 Q15.5 9 13 11 Q13 15 9 14 Q6 15.5 5 12.5 Q1 12 2.5 9 Q0.5 6 3 5 Q2 3 4 2 Z" fill="#dde6f0" stroke="#222" stroke-width="1.2"/></svg>
<svg class="a" style="left:14px;top:298px" width="16" height="16" viewBox="0 0 16 16"><path d="M1 14 Q3 7 6 9 Q9 12 11 8 Q13 4 15 1.5" stroke="#222" stroke-width="1.2" fill="none"/></svg>
<svg class="a" style="left:14px;top:320px" width="16" height="16" viewBox="0 0 16 16"><ellipse cx="8" cy="8" rx="6.8" ry="4.2" fill="#dde6f0" stroke="#111" stroke-width="1.3"/><rect x="0.0" y="6.5" width="3" height="3" fill="#1a6fc4" stroke="#0d3f7a" stroke-width="0.5"/><rect x="13.0" y="6.5" width="3" height="3" fill="#1a6fc4" stroke="#0d3f7a" stroke-width="0.5"/><rect x="6.5" y="2.3" width="3" height="3" fill="#1a6fc4" stroke="#0d3f7a" stroke-width="0.5"/><rect x="6.5" y="10.7" width="3" height="3" fill="#1a6fc4" stroke="#0d3f7a" stroke-width="0.5"/></svg>
<svg class="a" style="left:14px;top:342px" width="16" height="16" viewBox="0 0 16 16"><path d="M3 10 Q0.5 6 6 4 Q12 2.5 14 6 Q15 10 10 12 Q8 12.5 6 12" stroke="#333" stroke-width="1.3" fill="#dde6f0"/><rect x="1.0" y="8.5" width="3" height="3" fill="#1a6fc4" stroke="#0d3f7a" stroke-width="0.5"/><rect x="5.5" y="11.0" width="3" height="3" fill="#1a6fc4" stroke="#0d3f7a" stroke-width="0.5"/></svg>
<svg class="a" style="left:14px;top:364px" width="16" height="16" viewBox="0 0 16 16"><path d="M7.5 0.5 H12 L15.5 4 V13 H7.5 Z" fill="#e6eef6" stroke="#3a6a9a" stroke-width="0.9"/><rect x="1.5" y="4.5" width="8" height="6" fill="#e8e070" stroke="#2a4a3a"/><circle cx="9" cy="11" r="3.2" fill="#e8e070" stroke="#2a4a3a"/><path d="M16 13 V16 H13 Z" fill="#111"/><rect x="0.5" y="8.5" width="3" height="3" fill="#1a6fc4" stroke="#0d3f7a" stroke-width="0.5"/></svg>
<svg class="a" style="left:14px;top:386px" width="16" height="16" viewBox="0 0 16 16"><rect x="2.5" y="2.5" width="8" height="6" fill="#e8e070" stroke="#2a4a3a"/><circle cx="10" cy="10.5" r="3.8" fill="#e8e070" stroke="#2a4a3a"/><rect x="0.5" y="7.5" width="3" height="3" fill="#1a6fc4" stroke="#0d3f7a" stroke-width="0.5"/></svg>
<svg class="a" style="left:14px;top:408px" width="16" height="16" viewBox="0 0 16 16"><rect x="6.5" y="6.5" width="3" height="3" fill="#1a6fc4"/></svg>
<svg class="a" style="left:14px;top:430px" width="16" height="16" viewBox="0 0 16 16"><rect x="3.5" y="3.5" width="9" height="9" fill="#fff"/><path d="M4 8 L8 4 M4 12 L12 4 M8 12 L12 8" stroke="#555" stroke-width="1.3"/><path d="M0.5 3.5 H15.5 M0.5 12.5 H15.5 M3.5 0.5 V15.5 M12.5 0.5 V15.5" stroke="#2a5a90" stroke-width="1.3"/></svg>
<svg class="a" style="left:14px;top:452px" width="16" height="16" viewBox="0 0 16 16"><defs><linearGradient id="gg" x1="0" y1="0" x2="1" y2="1"><stop offset="0" stop-color="#1a2a4a"/><stop offset="1" stop-color="#c8c040"/></linearGradient></defs><rect x="3.5" y="3.5" width="9" height="9" fill="url(#gg)"/><path d="M0.5 3.5 H15.5 M0.5 12.5 H15.5 M3.5 0.5 V15.5 M12.5 0.5 V15.5" stroke="#111" stroke-width="1.5"/></svg>
<svg class="a" style="left:14px;top:474px" width="16" height="16" viewBox="0 0 16 16"><path d="M0.5 1.5 H9.5 L15.5 7.5 V13.5 H0.5 Z" fill="#dbe6f2" stroke="#1f4a80" stroke-width="1.1"/><circle cx="6" cy="7" r="2.8" fill="#c8d8e8" stroke="#1f4a80" stroke-width="1.1"/></svg>
<svg class="a" style="left:14px;top:496px" width="16" height="16" viewBox="0 0 16 16"><rect x="1.5" y="1.5" width="13" height="13" fill="#5a80b8" stroke="#3a5a90"/><rect x="1.5" y="1.5" width="13" height="2.5" fill="#2a64c0"/><g fill="#fff"><rect x="3" y="5.5" width="3" height="2"/><rect x="7" y="5.5" width="3" height="2"/><rect x="11" y="5.5" width="2.5" height="2"/><rect x="3" y="9" width="3" height="2"/><rect x="7" y="9" width="3" height="2"/><rect x="11" y="9" width="2.5" height="2"/><rect x="3" y="12" width="3" height="1.8"/><rect x="7" y="12" width="3" height="1.8"/><rect x="11" y="12" width="2.5" height="1.8"/></g></svg>
<svg class="a" style="left:14px;top:518px" width="16" height="16" viewBox="0 0 16 16"><path d="M2.5 14.5 L8 1.5 L13.5 14.5 M4.5 10 H11.5" stroke="#111" stroke-width="1.4" fill="none"/></svg>
<div class="a" style="left:1329px;top:107px;width:27px;height:392px;background:#f0f0f0;border-top:1px solid #fff;border-left:1px solid #fff;border-right:1px solid #a0a0a0;border-bottom:1px solid #a0a0a0"></div>
<div class="a" style="left:1334px;top:111px;width:19px;height:1px;background:#fff"></div>
<div class="a" style="left:1334px;top:112px;width:19px;height:1px;background:#a0a0a0"></div>
<div class="a" style="left:1334px;top:115px;width:19px;height:1px;background:#fff"></div>
<div class="a" style="left:1334px;top:116px;width:19px;height:1px;background:#a0a0a0"></div>
<div class="a" style="left:1330px;top:499px;width:26px;height:106px;background:#f0f0f0;border-top:1px solid #fff;border-left:1px solid #fff;border-right:1px solid #a0a0a0;border-bottom:1px solid #a0a0a0"></div>
<div class="a" style="left:1333px;top:502px;width:20px;height:1px;background:#fff"></div>
<div class="a" style="left:1333px;top:503px;width:20px;height:1px;background:#a0a0a0"></div>
<div class="a" style="left:1333px;top:507px;width:20px;height:1px;background:#fff"></div>
<div class="a" style="left:1333px;top:508px;width:20px;height:1px;background:#a0a0a0"></div>
<svg class="a" style="left:1335px;top:122px" width="16" height="16" viewBox="0 0 16 16"><path d="M15.5 1.5 L9.5 7.5" stroke="#1a1a1a" stroke-width="4.2" stroke-linecap="round"/><path d="M15.5 1.5 L9.5 7.5" stroke="#e8c020" stroke-width="2.8" stroke-linecap="round"/><path d="M9.8 7.2 L7.8 9.2" stroke="#3aa890" stroke-width="3"/><path d="M7.8 9.2 L5.5 11.5" stroke="#e0643a" stroke-width="3.2" stroke-linecap="round"/><path d="M0.5 14.5 H16" stroke="#222" stroke-width="1"/></svg>
<svg class="a" style="left:1335px;top:144px" width="16" height="16" viewBox="0 0 16 16"><circle cx="3.5" cy="5" r="3" fill="#d8e2ec" stroke="#111" stroke-width="1.1"/><circle cx="9" cy="11.5" r="3" fill="#d8e2ec" stroke="#111" stroke-width="1.1"/><circle cx="12" cy="12.5" r="2.8" fill="#e6edf4" stroke="#111" stroke-width="1.1"/><path d="M6.5 3 Q10 0.5 12.5 5" stroke="#1f5a9c" stroke-width="1.6" fill="none"/><path d="M10 4.5 L15 4.5 L12.5 7.5 Z" fill="#1f5a9c"/></svg>
<svg class="a" style="left:1335px;top:166px" width="16" height="16" viewBox="0 0 16 16"><path d="M6.3 3 V13.8 H1.5 Z" fill="#f4f6f8" stroke="#111" stroke-width="1.2" stroke-linejoin="round"/><path d="M9.7 3 V13.8 H14.5 Z" fill="#e2e8ee" stroke="#111" stroke-width="1.2" stroke-linejoin="round"/><path d="M8 0.5 V16" stroke="#1a7ac4" stroke-width="1"/></svg>
<svg class="a" style="left:1335px;top:188px" width="16" height="16" viewBox="0 0 16 16"><path d="M15.5 7.5 H12 Q12 1.5 7.8 1.5 Q4.5 1.5 4.5 7.5 H3.5 Q0.5 7.5 0.5 11 Q0.5 14.5 3.5 14.5 H15.5" stroke="#111" stroke-width="1.2" fill="none"/><path d="M15.5 10 H9.5 V5 Q9.5 3.5 7.8 3.5 Q6.5 3.5 6.5 5 V10 H3.5 Q2.5 10 2.5 11 Q2.5 12.5 3.5 12.5 H15.5" stroke="#2a8ad0" stroke-width="1.1" fill="none"/></svg>
<svg class="a" style="left:1335px;top:210px" width="16" height="16" viewBox="0 0 16 16"><g fill="#dbe6f2" stroke="#111" stroke-width="1.1"><rect x="0.6" y="0.6" width="5.8" height="5.8"/><rect x="9.6" y="0.6" width="5.8" height="5.8"/><rect x="0.6" y="9.6" width="5.8" height="5.8"/><rect x="9.6" y="9.6" width="5.8" height="5.8"/></g></svg>
<svg class="a" style="left:1335px;top:232px" width="16" height="16" viewBox="0 0 16 16"><path d="M8 1.5 V14.5 M1.5 8 H14.5" stroke="#2d6aa8" stroke-width="2.2"/><path d="M8 0 L5 3.5 H11 Z M8 16 L5 12.5 H11 Z M0 8 L3.5 5 V11 Z M16 8 L12.5 5 V11 Z" fill="#2d6aa8"/></svg>
<svg class="a" style="left:1335px;top:254px" width="16" height="16" viewBox="0 0 16 16"><path d="M5 3.5 A6 6 0 1 0 10 2.8" stroke="#2d6aa8" stroke-width="2.2" fill="none"/><path d="M3.5 0.5 L8.5 3 L4 7 Z" fill="#2d6aa8"/></svg>
<svg class="a" style="left:1335px;top:276px" width="16" height="16" viewBox="0 0 16 16"><defs><linearGradient id="gsc" x1="0" y1="0" x2="1" y2="1"><stop offset="0" stop-color="#f6f8fb"/><stop offset="1" stop-color="#b8cce0"/></linearGradient></defs><rect x="0.5" y="0.5" width="15" height="15" fill="url(#gsc)" stroke="#2d5a8a" stroke-width="1"/><path d="M0.5 0 V0.5 H15.5 V15.5" stroke="#1a1a1a" fill="none"/><rect x="0.5" y="7.5" width="8" height="8" fill="none" stroke="#111" stroke-dasharray="1 1"/></svg>
<svg class="a" style="left:1335px;top:298px" width="16" height="16" viewBox="0 0 16 16"><path d="M6 1.5 L15.5 15 H6 Z" fill="#dce6f0"/><path d="M6 1.5 L15.5 15 H6" stroke="#2d5a8a" stroke-width="1.1" fill="none"/><path d="M4.5 1.5 H0.8 V15 H4.5" stroke="#111" stroke-width="1.2" fill="none"/><path d="M5 2 V15" stroke="#111" stroke-dasharray="1 1"/></svg>
<svg class="a" style="left:1335px;top:320px" width="16" height="16" viewBox="0 0 16 16"><path d="M0.5 8 H5" stroke="#111" stroke-width="1.3"/><path d="M8 8 H16" stroke="#111" stroke-width="1" stroke-dasharray="1.5 1"/><path d="M4 13.5 L9 3" stroke="#2d7ac0" stroke-width="1.3"/></svg>
<svg class="a" style="left:1335px;top:342px" width="16" height="16" viewBox="0 0 16 16"><path d="M0.5 10 H5" stroke="#111" stroke-width="1.3"/><path d="M6 10 H11" stroke="#111" stroke-width="1" stroke-dasharray="1.5 1"/><path d="M9.5 15.5 L15 4" stroke="#2d7ac0" stroke-width="1.3"/></svg>
<svg class="a" style="left:1335px;top:364px" width="16" height="16" viewBox="0 0 16 16"><defs><linearGradient id="gbr" x1="0" y1="0" x2="1" y2="1"><stop offset="0" stop-color="#f4f6f9"/><stop offset="1" stop-color="#c4d2e2"/></linearGradient></defs><rect x="0.6" y="4.6" width="14.8" height="10.8" fill="url(#gbr)" stroke="#111" stroke-width="1.2"/><rect x="9" y="2.5" width="3.5" height="3.5" fill="#2d6aa8"/></svg>
<svg class="a" style="left:1335px;top:386px" width="16" height="16" viewBox="0 0 16 16"><path d="M4 3.5 H1.5 V14.5 H14.5 V3.5 H12" fill="#dde6f0" stroke="#111" stroke-width="1.1"/><rect x="3.5" y="2.5" width="3" height="3" fill="#2d6aa8"/><rect x="10" y="2.5" width="3" height="3" fill="#2d6aa8"/></svg>
<svg class="a" style="left:1335px;top:408px" width="16" height="16" viewBox="0 0 16 16"><path d="M0.5 8 H15.5" stroke="#111" stroke-width="1.6"/><path d="M3.5 4 L8 8 L3.5 12 Z M12.5 4 L8 8 L12.5 12 Z" fill="#2d5a8a"/></svg>
<svg class="a" style="left:1335px;top:430px" width="16" height="16" viewBox="0 0 16 16"><path d="M1 15.5 V8.5 M8 1 H15.5" stroke="#111" stroke-width="1.3"/><path d="M1 7.5 V1 H7" stroke="#111" stroke-width="1" stroke-dasharray="1 1" shape-rendering="crispEdges"/><path d="M1.2 9 L8 1.5" stroke="#2d7ac0" stroke-width="1.4"/></svg>
<svg class="a" style="left:1335px;top:452px" width="16" height="16" viewBox="0 0 16 16"><path d="M1 15.5 V9.5 M9 1 H15.5" stroke="#111" stroke-width="1.3"/><path d="M1 8.5 V1 H8" stroke="#111" stroke-width="1" stroke-dasharray="1 1" shape-rendering="crispEdges"/><path d="M1.2 10 Q1.5 1.5 9 1.3" stroke="#2d7ac0" stroke-width="1.5" fill="none"/></svg>
<svg class="a" style="left:1335px;top:474px" width="16" height="16" viewBox="0 0 16 16"><path d="M2.5 13.5 L10 6" stroke="#b82a1a" stroke-width="3.6" stroke-linecap="round"/><path d="M1 8 L3.5 9 L3 5.5 L5.5 8 L7 5 L7.5 8.5 L10.5 8 L8 10.5 L10.5 12.5 L7 12 L7 15.5 L5 12.5 L2.5 15.5 L3 12 L0 12 L2.5 10.5 Z" fill="#f2c818" opacity=".85"/><path d="M10.5 5.5 L15 1" stroke="#8a9ab0" stroke-width="1.6" stroke-dasharray="1 1"/></svg>
<svg class="a" style="left:1335px;top:514px" width="16" height="16" viewBox="0 0 16 16"><rect x="1.5" y="0.5" width="8" height="7" fill="#dbe8f4" stroke="#2d5a8a" stroke-width="0.8"/><rect x="6.5" y="7.5" width="8" height="7" fill="#dbe8f4" stroke="#2d5a8a" stroke-width="0.8"/><rect x="3.5" y="3" width="9" height="9" fill="#4a7ab0" stroke="#24508a" stroke-width="0.8"/></svg>
<svg class="a" style="left:1335px;top:536px" width="16" height="16" viewBox="0 0 16 16"><rect x="3.5" y="3" width="9" height="9" fill="#4a7ab0" stroke="#24508a" stroke-width="0.8"/><rect x="1.5" y="0.5" width="8" height="6" fill="#e6eef6" stroke="#2d5a8a" stroke-width="0.8"/><rect x="6.5" y="8.5" width="8" height="6" fill="#e6eef6" stroke="#2d5a8a" stroke-width="0.8"/></svg>
<svg class="a" style="left:1335px;top:558px" width="16" height="16" viewBox="0 0 16 16"><rect x="5.5" y="5.5" width="9" height="9" fill="#dbe8f4" stroke="#2d5a8a" stroke-width="0.8"/><rect x="1.5" y="1.5" width="9" height="9" fill="#4a7ab0" stroke="#24508a" stroke-width="0.8"/></svg>
<svg class="a" style="left:1335px;top:580px" width="16" height="16" viewBox="0 0 16 16"><rect x="1.5" y="1.5" width="9" height="9" fill="#4a7ab0" stroke="#24508a" stroke-width="0.8"/><rect x="5.5" y="5.5" width="9" height="9" fill="#dbe8f4" stroke="#2d5a8a" stroke-width="0.8"/></svg>
<div class="a" style="left:38px;top:629px;width:18px;height:15px;background:#f0f0f0;border-left:1px solid #fff;border-right:1px solid #a0a0a0;border-bottom:1px solid #a0a0a0"></div>
<div class="a" style="left:56px;top:629px;width:18px;height:15px;background:#f0f0f0;border-left:1px solid #fff;border-right:1px solid #a0a0a0;border-bottom:1px solid #a0a0a0"></div>
<div class="a" style="left:74px;top:629px;width:18px;height:15px;background:#f0f0f0;border-left:1px solid #fff;border-right:1px solid #a0a0a0;border-bottom:1px solid #a0a0a0"></div>
<div class="a" style="left:92px;top:629px;width:18px;height:15px;background:#f0f0f0;border-left:1px solid #fff;border-right:1px solid #a0a0a0;border-bottom:1px solid #a0a0a0"></div>
<div class="a" style="left:37px;top:629px;width:1px;height:15px;background:#a0a0a0"></div>
<svg class="a" style="left:42px;top:632px" width="8" height="9" viewBox="0 0 8 9"><rect x="0" y="0" width="1.5" height="9" fill="#000"/><path d="M7 0 L2 4.5 L7 9 Z" fill="#000"/></svg>
<svg class="a" style="left:62px;top:632px" width="6" height="9" viewBox="0 0 6 9"><path d="M5 0 L0 4.5 L5 9 Z" fill="#000"/></svg>
<svg class="a" style="left:80px;top:632px" width="6" height="9" viewBox="0 0 6 9"><path d="M0 0 L5 4.5 L0 9 Z" fill="#000"/></svg>
<svg class="a" style="left:97px;top:632px" width="8" height="9" viewBox="0 0 8 9"><path d="M0 0 L5 4.5 L0 9 Z" fill="#000"/><rect x="6" y="0" width="1.5" height="9" fill="#000"/></svg>
<svg class="a" style="left:100px;top:620px" width="170" height="30" viewBox="0 0 170 30"><path d="M13 8 L58.5 8 L54.5 23.5 L17.5 23.5 Z" fill="#000"/><path d="M14 8.5 L18 23" stroke="#fff" stroke-width="1"/><path d="M57.5 8.5 L53.5 23" stroke="#fff" stroke-width="1"/><path d="M59 9 L107.5 9 L104 23 L55.5 23 Z" fill="#f0f0f0"/><path d="M58.5 8.5 L55 23.5 L104.5 23.5 L108 8.5" stroke="#000" stroke-width="1.1" fill="none"/><path d="M109 9 L158.5 9 L155 23 L109.5 23 Z" fill="#f0f0f0"/><path d="M108.5 8.5 L109.5 23.5 L155 23.5 L158.5 8.5" stroke="#000" stroke-width="1.1" fill="none"/></svg>
<div class="a t" style="left:121px;top:629px;font-size:12px;color:#fff;transform:scaleX(0.9);transform-origin:0 0">Model</div>
<div class="a t" style="left:162px;top:629px;font-size:12px;color:#a8a8a8;transform:scaleX(0.9);transform-origin:0 0">Layout1</div>
<div class="a t" style="left:212px;top:629px;font-size:12px;color:#a8a8a8;transform:scaleX(0.9);transform-origin:0 0">Layout2</div>
<div class="a" style="left:10px;top:646px;width:1346px;height:1px;background:#fff"></div>
<div class="a" style="left:1329px;top:629px;width:1px;height:16px;background:#fff"></div>
<div class="a" style="left:10px;top:651px;width:1346px;height:1px;background:#696969"></div>
<div class="a" style="left:10px;top:652px;width:1346px;height:1px;background:#fff"></div>
<div class="a" style="left:16px;top:661px;width:1px;height:40px;background:#fff"></div>
<div class="a" style="left:17px;top:661px;width:1px;height:40px;background:#a0a0a0"></div>
<div class="a" style="left:20px;top:661px;width:1px;height:40px;background:#fff"></div>
<div class="a" style="left:21px;top:661px;width:1px;height:40px;background:#a0a0a0"></div>
<div class="a" style="left:16px;top:700px;width:6px;height:1px;background:#a0a0a0"></div>
<div class="a" style="left:26px;top:661px;width:1323px;height:44px;background:#fff;border-left:2px solid #6a6a6a;border-top:2px solid #6a6a6a"></div>
<div class="a" style="left:28px;top:685px;width:1320px;height:1px;background:#a0a0a0"></div>
<div class="a" style="left:1348px;top:661px;width:1px;height:25px;background:#e0e0e0"></div>
<div class="a t" style="left:29px;top:666px;font-family:'Liberation Mono',monospace;font-size:13.33px;line-height:14px;color:#2a2a2a">Press ESC or ENTER to exit, or right-click to display shortcut menu.</div>
<div class="a" style="left:1332px;top:663px;width:16px;height:22px;background:#efefef"></div>
<svg class="a" style="left:1336px;top:666px" width="8" height="5" viewBox="0 0 8 5"><path d="M0 4.5 L4 0.5 L8 4.5 Z" fill="#444"/></svg>
<svg class="a" style="left:1336px;top:677px" width="8" height="5" viewBox="0 0 8 5"><path d="M0 0.5 L4 4.5 L8 0.5 Z" fill="#444"/></svg>
<div class="a" style="left:1262px;top:687px;width:68px;height:18px;background:#ececec"></div>
<div class="a" style="left:1330px;top:686px;width:26px;height:20px;background:#f0f0f0"></div>
<svg class="a" style="left:1271px;top:691px" width="5" height="9" viewBox="0 0 5 9"><path d="M4.5 0 L0 4.5 L4.5 9 Z" fill="#333"/></svg>
<svg class="a" style="left:1319px;top:691px" width="5" height="9" viewBox="0 0 5 9"><path d="M0 0 L4.5 4.5 L0 9 Z" fill="#333"/></svg>
<div class="a" style="left:1282px;top:689px;width:15px;height:16px;border:1px solid #a0a0a0;border-radius:2px;background:linear-gradient(#f4f4f4,#f0f0f0 45%,#d0d0d0)"></div>
<div class="a" style="left:10px;top:706px;width:1346px;height:1px;background:#8a8a8a"></div>
<div class="a" style="left:10px;top:707px;width:1346px;height:1px;background:#fff"></div>
<div class="a" style="left:10px;top:708px;width:1346px;height:1px;background:#a0a0a0"></div>
<div class="a" style="left:10px;top:709px;width:1346px;height:21px;background:#f0eded"></div>
<div class="a" style="left:10px;top:729px;width:1346px;height:1px;background:#fbfbfb"></div>
<div class="a" style="left:10px;top:709px;width:4px;height:20px;background:#f4eceb"></div>
<div class="a" style="left:15px;top:711px;width:165px;height:18px;border:1px solid #a0a0a0;background:#efeded"></div>
<div class="a t" style="left:18px;top:714px;font-size:12px;transform:scaleX(0.9);transform-origin:0 0;color:#000">1210.1880, 564.3876, 0.0000</div>
<div class="a" style="left:185px;top:711px;width:32px;height:18px;border-top:1px solid #fff;border-left:1px solid #fff;border-right:1px solid #a0a0a0;border-bottom:1px solid #a0a0a0;background:#f0eded"></div>
<div class="a t" style="left:186.5px;top:714px;font-size:12px;transform:scaleX(0.88);transform-origin:0 0;color:#000">SNAP</div>
<div class="a" style="left:222px;top:711px;width:30px;height:18px;border-top:1px solid #fff;border-left:1px solid #fff;border-right:1px solid #a0a0a0;border-bottom:1px solid #a0a0a0;background:#f0eded"></div>
<div class="a t" style="left:223.5px;top:714px;font-size:12px;transform:scaleX(0.88);transform-origin:0 0;color:#000">GRID</div>
<div class="a" style="left:256px;top:711px;width:42px;height:18px;border-top:1px solid #fff;border-left:1px solid #fff;border-right:1px solid #a0a0a0;border-bottom:1px solid #a0a0a0;background:#f0eded"></div>
<div class="a t" style="left:257.5px;top:714px;font-size:12px;transform:scaleX(0.88);transform-origin:0 0;color:#000">ORTHO</div>
<div class="a" style="left:303px;top:711px;width:40px;height:18px;border-top:1px solid #222;border-left:1px solid #222;border-right:1px solid #fff;border-bottom:1px solid #fff;background:#f0eded;box-shadow:inset 1px 1px 0 #b0b0b0"></div>
<div class="a t" style="left:306px;top:714px;font-size:12px;transform:scaleX(0.88);transform-origin:0 0;color:#000">POLAR</div>
<div class="a" style="left:348px;top:711px;width:40px;height:18px;border-top:1px solid #fff;border-left:1px solid #fff;border-right:1px solid #a0a0a0;border-bottom:1px solid #a0a0a0;background:#f0eded"></div>
<div class="a t" style="left:349.5px;top:714px;font-size:12px;transform:scaleX(0.88);transform-origin:0 0;color:#000">OSNAP</div>
<div class="a" style="left:392px;top:711px;width:48px;height:18px;border-top:1px solid #222;border-left:1px solid #222;border-right:1px solid #fff;border-bottom:1px solid #fff;background:#f0eded;box-shadow:inset 1px 1px 0 #b0b0b0"></div>
<div class="a t" style="left:395px;top:714px;font-size:12px;transform:scaleX(0.88);transform-origin:0 0;color:#000">OTRACK</div>
<div class="a" style="left:444px;top:711px;width:34px;height:18px;border-top:1px solid #222;border-left:1px solid #222;border-right:1px solid #fff;border-bottom:1px solid #fff;background:#f0eded;box-shadow:inset 1px 1px 0 #b0b0b0"></div>
<div class="a t" style="left:447px;top:714px;font-size:12px;transform:scaleX(0.88);transform-origin:0 0;color:#000">DUCS</div>
<div class="a" style="left:482px;top:711px;width:27px;height:18px;border-top:1px solid #222;border-left:1px solid #222;border-right:1px solid #fff;border-bottom:1px solid #fff;background:#f0eded;box-shadow:inset 1px 1px 0 #b0b0b0"></div>
<div class="a t" style="left:485px;top:714px;font-size:12px;transform:scaleX(0.88);transform-origin:0 0;color:#000">DYN</div>
<div class="a" style="left:513px;top:711px;width:28px;height:18px;border-top:1px solid #fff;border-left:1px solid #fff;border-right:1px solid #a0a0a0;border-bottom:1px solid #a0a0a0;background:#f0eded"></div>
<div class="a t" style="left:514.5px;top:714px;font-size:12px;transform:scaleX(0.88);transform-origin:0 0;color:#000">LWT</div>
<div class="a" style="left:545px;top:711px;width:42px;height:18px;border-top:1px solid #222;border-left:1px solid #222;border-right:1px solid #fff;border-bottom:1px solid #fff;background:#f0eded;box-shadow:inset 1px 1px 0 #b0b0b0"></div>
<div class="a t" style="left:548px;top:714px;font-size:12px;transform:scaleX(0.88);transform-origin:0 0;color:#000">MODEL</div>
<div class="a" style="left:1257px;top:711px;width:99px;height:18px;background:#f8f8f8"></div>
<div class="a" style="left:1257px;top:711px;width:1px;height:18px;background:#c8c8c8"></div>
<svg class="a" style="left:1262px;top:712px" width="14" height="16" viewBox="0 0 14 16"><ellipse cx="7.5" cy="6" rx="3.6" ry="5.6" transform="rotate(40 7.5 6)" fill="#5a78b4" stroke="#2a4a8a" stroke-width="0.7"/><ellipse cx="8" cy="5.5" rx="1.6" ry="3.2" transform="rotate(40 8 5.5)" fill="#c8d6ee"/><path d="M5 1 L10 9" stroke="#24406e" stroke-width="1.2"/><path d="M6.5 10.5 V14" stroke="#5070b0" stroke-width="2"/><path d="M1.5 15 H11" stroke="#8aa0c8" stroke-width="1.2"/></svg>
<svg class="a" style="left:1281px;top:711px" width="17" height="17" viewBox="0 0 17 17"><path d="M8.5 6 V3.5 Q8.5 0.8 11.8 0.8 Q15 0.8 15 3.5 V8" stroke="#e6d68a" stroke-width="1.6" fill="none"/><rect x="0.5" y="5.5" width="11" height="10.5" rx="2" fill="#f2e6a6" stroke="#2a2810" stroke-width="0.9"/><path d="M0.8 9 H11.2 M0.8 12.5 H11.2" stroke="#2a2810" stroke-width="1.1"/><rect x="2" y="6" width="4" height="9" fill="#fff8d0" opacity=".6"/></svg>
<svg class="a" style="left:1306px;top:720px" width="9" height="5" viewBox="0 0 9 5"><path d="M0 0 H9 L4.5 5 Z" fill="#a8a8a8"/></svg>
<svg class="a" style="left:1323px;top:712px" width="17" height="16" viewBox="0 0 17 16"><rect x="0.5" y="0.5" width="16" height="15" fill="#fff" stroke="#1a3050" stroke-dasharray="3 1"/><rect x="2.5" y="2.5" width="12" height="11" fill="#dfe8f2" stroke="#6a8ab0"/><path d="M9 3 H14 V13 H10 Q8 10 9 3 Z" fill="#8ab0d8"/></svg>
<div class="a" style="left:1325px;top:729px;width:6px;height:8px;background:rgba(255,255,255,0.55)"></div>
<div class="a" style="left:1343px;top:707px;width:21px;height:22px;border-radius:50%;border:3px solid rgba(235,242,250,0.7)"></div>
</body></html>
